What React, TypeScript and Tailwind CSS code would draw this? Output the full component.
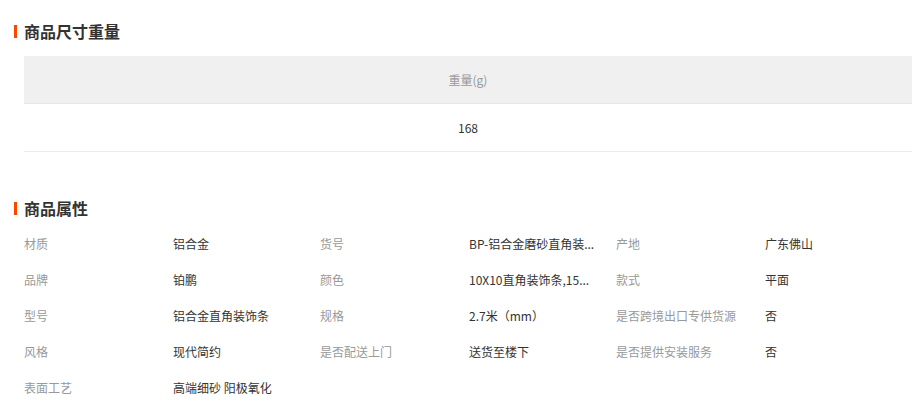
import React from 'react';

const attrs: [string, string][] = [
  ['材质', '铝合金'],
  ['货号', 'BP-铝合金磨砂直角装...'],
  ['产地', '广东佛山'],
  ['品牌', '铂鹏'],
  ['颜色', '10X10直角装饰条,15...'],
  ['款式', '平面'],
  ['型号', '铝合金直角装饰条'],
  ['规格', '2.7米（mm）'],
  ['是否跨境出口专供货源', '否'],
  ['风格', '现代简约'],
  ['是否配送上门', '送货至楼下'],
  ['是否提供安装服务', '否'],
  ['表面工艺', '高端细砂 阳极氧化'],
];

const SectionTitle: React.FC<{ text: string }> = ({ text }) => (
  <div className="flex items-center h-6 pl-[14px]">
    <span className="w-[3px] h-[13px] bg-[#ff4400] mr-[7px]" />
    <h3 className="text-[16px] font-bold text-[#333] leading-6">{text}</h3>
  </div>
);

export default function App() {
  return (
    <div
      className="w-[922px] h-[408px] bg-white overflow-hidden pt-[19px]"
      style={{ fontFamily: '"Microsoft YaHei", "Noto Sans CJK SC", sans-serif' }}
    >
      <SectionTitle text="商品尺寸重量" />

      {/* size / weight table */}
      <div className="mt-[13px] ml-6 w-[888px] text-[12px]">
        <div className="h-12 flex items-center justify-center bg-[#f0f0f0] border-b border-[#e6e6e6] text-[#999]">
          重量(g)
        </div>
        <div className="h-12 flex items-center justify-center border-b border-[#ececec] text-[#333]">
          168
        </div>
      </div>

      <div className="mt-[44px]">
        <SectionTitle text="商品属性" />
      </div>

      {/* attribute grid */}
      <div className="mt-[6px] ml-6 grid grid-cols-3 w-[888px] text-[12px]">
        {attrs.map(([k, v]) => (
          <div key={k} className="flex items-center h-9">
            <span className="w-[149px] shrink-0 text-[#999] whitespace-nowrap">{k}</span>
            <span className="w-[145px] text-[#333] whitespace-nowrap">{v}</span>
          </div>
        ))}
      </div>
    </div>
  );
}
